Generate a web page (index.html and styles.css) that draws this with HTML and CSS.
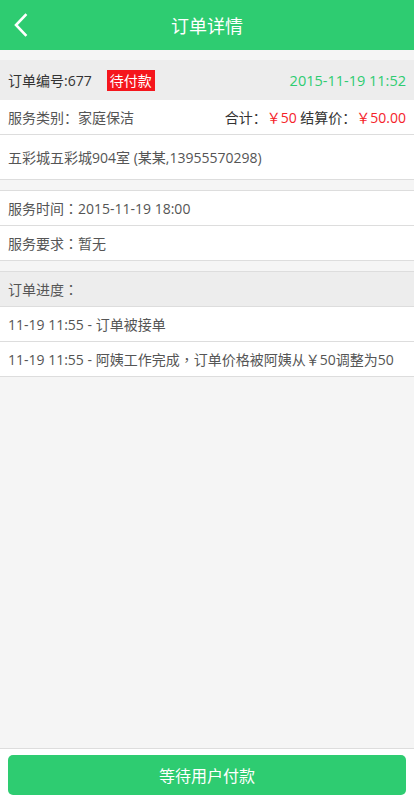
FILE: index.html
```html
<!DOCTYPE html>
<html lang="zh">
<head>
<meta charset="utf-8">
<title>订单详情</title>
<link rel="stylesheet" href="styles.css">
</head>
<body>
<div class="page">
  <header class="topbar">
    <span class="back">
      <svg width="14" height="24" viewBox="0 0 14 24"><path d="M11.5 2 L2 12 L11.5 22" fill="none" stroke="#fff" stroke-width="2.6" stroke-linecap="square"/></svg>
    </span>
    <h1 class="title">订单详情</h1>
  </header>
  <main class="content">
    <section class="group">
      <div class="row row-head">
        <span class="order-no">订单编号:677</span>
        <span class="badge">待付款</span>
        <span class="date">2015-11-19 11:52</span>
      </div>
      <div class="row">
        <span>服务类别<span class="p">：</span>家庭保洁</span>
        <span class="spacer"></span>
        <span class="dark">合计<span class="p">：</span></span><span class="red">￥50</span>&nbsp;<span class="dark">结算价<span class="p">：</span></span><span class="red">￥50.00</span>
      </div>
      <div class="row row-tall">五彩城五彩城904室 (某某,13955570298)</div>
    </section>
    <section class="group">
      <div class="row">服务时间<span class="p">：</span>2015-11-19 18:00</div>
      <div class="row">服务要求<span class="p">：</span>暂无</div>
    </section>
    <section class="group">
      <div class="row row-grey">订单进度<span class="p">：</span></div>
      <div class="row">11-19 11:55 - 订单被接单</div>
      <div class="row">11-19 11:55 - 阿姨工作完成<span class="p">，</span>订单价格被阿姨从￥50调整为50</div>
    </section>
  </main>
  <footer class="footer">
    <button class="btn">等待用户付款</button>
  </footer>
</div>
</body>
</html>
```

FILE: styles.css
```css
* { box-sizing: border-box; }
html, body { margin: 0; padding: 0; }
body {
  font-family: "Open Sans", "Noto Sans CJK SC", sans-serif;
  font-size: 14px;
  color: #555;
  background: #f5f5f5;
}
.page {
  height: 797px;
  display: flex;
  flex-direction: column;
}
.topbar {
  height: 50px;
  background: #2ecc71;
  display: flex;
  align-items: center;
  justify-content: center;
  position: relative;
  flex-shrink: 0;
}
.back {
  position: absolute;
  left: 14px;
  top: 13px;
  width: 14px;
  height: 24px;
  display: flex;
}
.title {
  margin: 0;
  font-size: 18px;
  font-weight: normal;
  color: #fff;
  line-height: 1;
  font-family: "Noto Sans CJK SC", sans-serif;
}
.content {
  flex: 1;
  padding-top: 10px;
}
.group {
  margin-bottom: 10px;
  border-top: 1px solid #ddd;
}
.group:first-child { border-top: none; }
.row {
  height: 35px;
  padding: 0 8px;
  display: flex;
  align-items: center;
  background: #fff;
  border-bottom: 1px solid #ddd;
  white-space: pre;
}
.p { font-family: "Noto Sans CJK TC", sans-serif; }
.row-head {
  height: 40px;
  background: #ededed;
  border-bottom: none;
}
.row-tall { height: 45px; }
.row-grey { background: #ededed; }
.order-no { color: #333; }
.badge {
  margin-left: 15px;
  background: #f5161d;
  color: #fff;
  height: 21px;
  line-height: 21px;
  padding: 0 3px;
  font-size: 14px;
  font-family: "Noto Sans CJK SC", sans-serif;
}
.date {
  margin-left: auto;
  color: #2ecc71;
  font-size: 14.5px;
}
.spacer { flex: 1; }
.dark { color: #333; }
.red { color: #f5222a; }
.footer {
  height: 49px;
  background: #fff;
  border-top: 1px solid #ddd;
  padding: 6px 8px 3px;
  flex-shrink: 0;
}
.btn {
  width: 100%;
  height: 40px;
  border: none;
  border-radius: 5px;
  background: #2ecc71;
  color: #fff;
  font-family: "Noto Sans CJK SC", sans-serif;
  font-size: 16px;
  padding: 0;
}
```
